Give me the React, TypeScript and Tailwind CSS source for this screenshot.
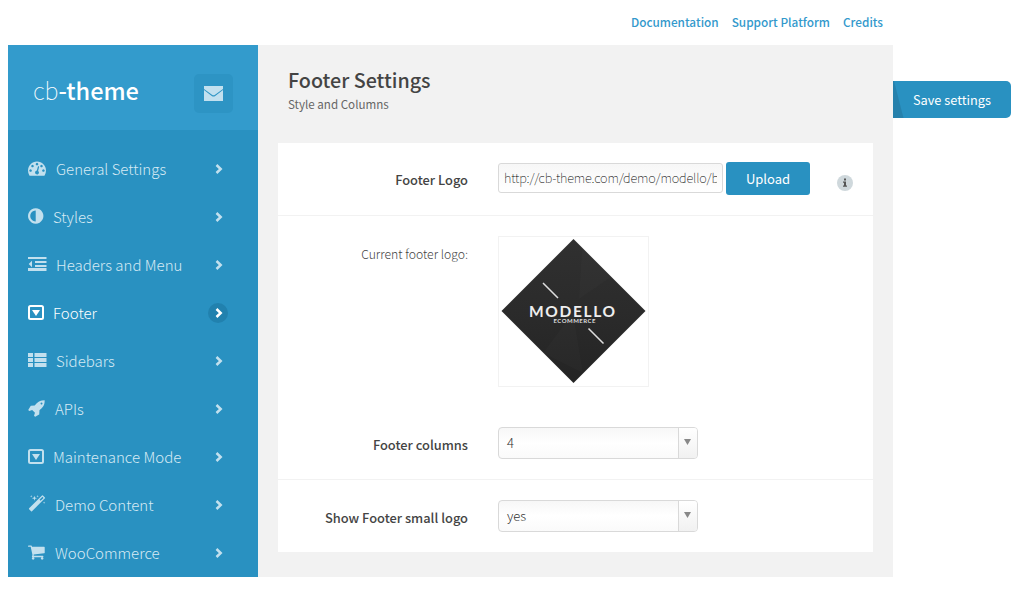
import React from "react";

type IconName = "gauge" | "adjust" | "outdent" | "caret" | "list" | "rocket" | "magic" | "cart";

const paths: Partial<Record<IconName, string>> = {
  gauge:
    "M384 1152q0-53-37.5-90.5t-90.5-37.5-90.5 37.5-37.5 90.5 37.5 90.5 90.5 37.5 90.5-37.5 37.5-90.5zm192-448q0-53-37.5-90.5t-90.5-37.5-90.5 37.5-37.5 90.5 37.5 90.5 90.5 37.5 90.5-37.5 37.5-90.5zm428 481l101-382q6-26-7.5-48.5t-38.5-29.5-48 6.5-30 39.5l-101 382q-60 5-107 43.5t-63 98.5q-20 77 20 146t117 89 146-20 89-117q16-60-6-117t-72-91zm660-33q0-53-37.5-90.5t-90.5-37.5-90.5 37.5-37.5 90.5 37.5 90.5 90.5 37.5 90.5-37.5 37.5-90.5zm-640-640q0-53-37.5-90.5t-90.5-37.5-90.5 37.5-37.5 90.5 37.5 90.5 90.5 37.5 90.5-37.5 37.5-90.5zm448 192q0-53-37.5-90.5t-90.5-37.5-90.5 37.5-37.5 90.5 37.5 90.5 90.5 37.5 90.5-37.5 37.5-90.5zm320 448q0 261-141 483-19 29-54 29h-1402q-35 0-54-29-141-221-141-483 0-182 71-348t191-286 286-191 348-71 348 71 286 191 191 286 71 348z",
  adjust:
    "M768 1440v-1088q-148 0-273 73t-198 198-73 273 73 273 198 198 273 73zm768-544q0 209-103 385.5t-279.5 279.5-385.5 103-385.5-103-279.5-279.5-103-385.5 103-385.5 279.5-279.5 385.5-103 385.5 103 279.5 279.5 103 385.5z",
  rocket:
    "M1440 448q0-40-28-68t-68-28-68 28-28 68 28 68 68 28 68-28 28-68zm224-288q0 249-75.5 430.5t-253.5 360.5q-81 80-195 176l-20 379q-2 16-16 26l-384 224q-7 4-16 4-12 0-23-9l-64-64q-13-14-8-32l85-276-281-281-276 85q-3 1-9 1-14 0-23-9l-64-64q-17-19-5-39l224-384q10-14 26-16l379-20q96-114 176-195 188-187 358-258t431-71q14 0 24 9.5t10 22.5z",
  magic:
    "M1254 581l293-293-107-107-293 293zm447-293q0 27-18 45l-1286 1286q-18 18-45 18t-45-18l-198-198q-18-18-18-45t18-45l1286-1286q18-18 45-18t45 18l198 198q18 18 18 45zm-1351-190l98 30-98 30-30 98-30-98-98-30 98-30 30-98zm350 162l196 60-196 60-60 196-60-196-196-60 196-60 60-196zm930 478l98 30-98 30-30 98-30-98-98-30 98-30 30-98zm-640-640l98 30-98 30-30 98-30-98-98-30 98-30 30-98z",
  cart:
    "M640 1536q0 52-38 90t-90 38-90-38-38-90 38-90 90-38 90 38 38 90zm896 0q0 52-38 90t-90 38-90-38-38-90 38-90 90-38 90 38 38 90zm128-1088v512q0 24-16.5 42.5t-40.5 21.5l-1044 122q13 60 13 70 0 16-24 64h920q26 0 45 19t19 45-19 45-45 19h-1024q-26 0-45-19t-19-45q0-11 8-31.5t16-36 21.5-40 15.5-29.5l-177-823h-204q-26 0-45-19t-19-45 19-45 45-19h256q16 0 28.5 6.5t19.5 15.5 13 24.5 8 26 5.5 29.5 4.5 26h1201q26 0 45 19t19 45z",
};

function MenuIcon({ name }: { name: IconName }) {
  if (name === "outdent")
    return (
      <svg width="19" height="18" viewBox="0 0 19 18" fill="currentColor">
        <path d="M0 1h18.5v2H0zM7 5h11.5v2H7zM7 9h11.5v2H7zM0 12h18.5v3H0zM4 4.800v6.400L0.700 8z" />
      </svg>
    );
  if (name === "list")
    return (
      <svg width="19" height="18" viewBox="0 0 19 18" fill="currentColor">
        <path d="M0 1h5v4H0zM6.500 1h12v4h-12zM0 6h5v4H0zM6.500 6h12v4h-12zM0 11h5v4H0zM6.500 11h12v4h-12z" />
      </svg>
    );
  if (name === "caret")
    return (
      <svg width="16" height="18" viewBox="0 0 16 18" fill="currentColor">
        <rect x="1" y="2" width="14" height="13" rx="1.5" fill="none" stroke="currentColor" strokeWidth="2" />
        <path d="M4 6h8l-4 6z" />
      </svg>
    );
  return (
    <svg width="18" height="18" viewBox="0 0 1792 1792" fill="currentColor" className="-mt-px mb-px overflow-visible">
      <path d={paths[name]} />
    </svg>
  );
}

const menu: { label: string; icon: IconName; gap: string; active?: boolean }[] = [
  { label: "General Settings", icon: "gauge", gap: "w-7" },
  { label: "Styles", icon: "adjust", gap: "w-[25px]" },
  { label: "Headers and Menu", icon: "outdent", gap: "w-7" },
  { label: "Footer", icon: "caret", gap: "w-[25px]", active: true },
  { label: "Sidebars", icon: "list", gap: "w-7" },
  { label: "APIs", icon: "rocket", gap: "w-[27px]" },
  { label: "Maintenance Mode", icon: "caret", gap: "w-[25px]" },
  { label: "Demo Content", icon: "magic", gap: "w-[27px]" },
  { label: "WooCommerce", icon: "cart", gap: "w-[27px]" },
];

function Select({ value }: { value: string }) {
  return (
    <div className="flex h-8 w-[200px] overflow-hidden rounded-[4px] border border-[#d9d9d9] bg-linear-to-b from-[#f7f7f7] via-white to-[#fafafa] text-[13px] font-light text-[#333]">
      <span className="flex-1 pl-2 leading-[30px]">{value}</span>
      <span className="flex w-[19px] border-l border-[#d9d9d9] bg-linear-to-b from-white to-[#f1f1f1] pt-[11px] pl-[5px]">
        <svg width="7" height="6" viewBox="0 0 7 6" fill="#888">
          <path d="M0 0h7L3.5 6z" />
        </svg>
      </span>
    </div>
  );
}

function Logo() {
  return (
    <svg width="149" height="149" viewBox="0 0 149 149">
      <defs>
        <linearGradient id="shade" x1="0" y1="0" x2="0" y2="1">
          <stop offset="0" stopColor="#303030" />
          <stop offset="0.5" stopColor="#2b2b2b" />
          <stop offset="1" stopColor="#242424" />
        </linearGradient>
      </defs>
      <path d="M74.500 2L146.500 74L74.500 146L2.500 74z" fill="url(#shade)" />
      <path d="M83 11L112 40L80 62zM74 76L84 136L44 116z" fill="#fff" fillOpacity=".015" />
      <path d="M44 46L59 61M89.500 91.500L104.500 106.500" stroke="#ddd" strokeWidth="1.500" />
      <text x="30" y="79.500" textLength="86" lengthAdjust="spacing" fill="#eee" fontFamily="Lato" fontWeight="700" fontSize="15.500">
        MODELLO
      </text>
      <text x="54.500" y="86" textLength="42" lengthAdjust="spacing" fill="#ddd" fontFamily="Lato" fontWeight="700" fontSize="6">
        ECOMMERCE
      </text>
    </svg>
  );
}

export default function App() {
  return (
    <div className="h-[599px] w-[1024px] overflow-hidden bg-white pl-2 font-['Noto_Sans_CJK_SC',sans-serif] text-[#444]">
      <nav className="flex h-[45px] w-[885px] justify-end gap-[13px] pr-[10px] text-[11.800px] leading-[44px] font-medium text-[#3399cc]">
        <a>Documentation</a>
        <a>Support Platform</a>
        <a>Credits</a>
      </nav>
      <div className="flex items-start">
        <aside className="h-[532px] w-[250px] bg-[#2991c1] text-white">
          <div className="flex h-[85px] items-center justify-between bg-[#339bcc] pr-[25px] pl-[25px]">
            <div className="mt-1 text-[23.500px] leading-8 font-light">
              <span className="font-thin">cb</span>
              <b className="font-medium">-theme</b>
            </div>
            <div className="mt-3 flex h-[39px] w-[39px] items-center justify-center rounded-[5px] bg-[#2d94c4]">
              <svg width="19" height="15" viewBox="0 0 19 15" fill="#c2e0ef">
                <path d="M0 0h19v3L11 8.800Q9.500 9.800 8 8.800L0 3zM0 4L7.800 10Q9.500 11.200 11.200 10L19 4V15H0z" />
              </svg>
            </div>
          </div>
          <ul className="pt-[15px]">
            {menu.map((m) => (
              <li key={m.label} className={m.active ? "flex h-12 items-center pr-[30px] pl-5 text-white" : "flex h-12 items-center pr-[30px] pl-5 text-[#c2e0ee]"}>
                <span className={m.gap}>
                  <MenuIcon name={m.icon} />
                </span>
                <span className={m.active ? "flex-1 text-[15px] leading-6 font-light" : "flex-1 text-[15px] leading-6 font-light text-[#d6eaf4]"}>{m.label}</span>
                <span className={m.active ? "flex h-5 w-5 items-center justify-center rounded-full bg-[#2181ae]" : "flex h-5 w-5 items-center justify-center"}>
                  <svg width="8" height="10" viewBox="0 0 8 10" fill="none" stroke="currentColor" strokeWidth="2.500" className="ml-px">
                    <path d="M1.500 1L5.700 5L1.500 9" />
                  </svg>
                </span>
              </li>
            ))}
          </ul>
        </aside>
        <main className="h-[532px] w-[635px] bg-[#f2f2f2] px-5">
          <header className="h-[98px] pt-[22px] pl-[10px]">
            <h1 className="text-[19.700px] leading-[25px] font-medium">Footer Settings</h1>
            <p className="text-[11.600px] leading-[24px] text-[#666]">Style and Columns</p>
          </header>
          <section className="h-[409px] bg-white text-[12.850px]">
            <div className="flex h-[73px] border-b border-[#f2f2f2]">
              <label className="w-[190px] pt-[27px] text-right leading-5 font-medium">Footer Logo</label>
              <div className="mt-5 ml-[30px] h-[30px] w-[225px] rounded-[3px] border border-[#d9d9d9] bg-linear-to-b from-[#f7f7f7] to-white px-[5px]">
                <div className="overflow-hidden text-[12.800px] leading-7 font-thin tracking-[-0.160px] whitespace-nowrap text-black">http://cb-theme.com/demo/modello/b</div>
              </div>
              <button className="mt-[19px] ml-[3px] h-[33px] w-[84px] rounded-[3px] bg-[#2991c1] text-[13px] text-white">Upload</button>
              <svg width="16" height="16" viewBox="0 0 16 16" className="mt-8 ml-[27px]">
                <circle cx="8" cy="8" r="8" fill="#cfd8dc" />
                <path d="M7 3.500h2v2H7zM6 6.500h3v4h1v1.300H6v-1.300h1V7.700H6z" fill="#555" />
              </svg>
            </div>
            <div className="flex h-[191px]">
              <span className="w-[190px] pt-[28px] text-right text-[12.200px] leading-5 font-light">Current footer logo:</span>
              <div className="mt-5 ml-[30px] h-[151px] w-[151px] border border-[#f2f2f2]">
                <Logo />
              </div>
            </div>
            <div className="flex h-[73px] border-b border-[#f2f2f2]">
              <label className="mr-[30px] w-[190px] pt-[28px] text-right leading-5 font-medium">Footer columns</label>
              <div className="pt-5">
                <Select value="4" />
              </div>
            </div>
            <div className="flex">
              <label className="mr-[30px] w-[190px] pt-[28px] text-right leading-5 font-medium">Show Footer small logo</label>
              <div className="pt-5">
                <Select value="yes" />
              </div>
            </div>
          </section>
        </main>
        <button className="mt-9 flex h-[37px] w-[118px] items-center overflow-hidden rounded-r-[5px] bg-[#2991c1] text-[12.750px] text-white">
          <svg width="20" height="37" viewBox="0 0 20 37" fill="#2681ac">
            <path d="M0 0h1l9.500 37H0z" />
          </svg>
          Save settings
        </button>
      </div>
    </div>
  );
}
